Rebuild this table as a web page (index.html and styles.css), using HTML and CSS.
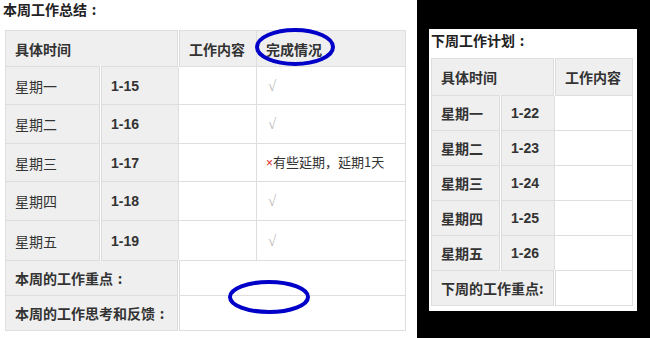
FILE: index.html
```html
<!DOCTYPE html>
<html lang="zh">
<head>
<meta charset="utf-8">
<link rel="stylesheet" href="styles.css">
</head>
<body>
<div class="page">
  <section class="left">
    <h2 class="title">本周工作总结<span class="colon">:</span></h2>
    <table class="sum">
      <colgroup><col class="c1"><col class="c2"><col class="c3"><col class="c4"></colgroup>
      <tr class="hd"><th colspan="2">具体时间</th><th>工作内容</th><th>完成情况</th></tr>
      <tr class="r38"><td class="lab">星期一</td><td class="lab date">1-15</td><td></td><td class="ok">√</td></tr>
      <tr class="r39"><td class="lab">星期二</td><td class="lab date">1-16</td><td></td><td class="ok">√</td></tr>
      <tr class="r38"><td class="lab">星期三</td><td class="lab date">1-17</td><td></td><td class="note"><span class="x">×</span>有些延期，延期1天</td></tr>
      <tr class="r39"><td class="lab">星期四</td><td class="lab date">1-18</td><td></td><td class="ok">√</td></tr>
      <tr class="r40"><td class="lab">星期五</td><td class="lab date">1-19</td><td></td><td class="ok">√</td></tr>
      <tr class="r35"><td class="lab bold" colspan="2">本周的工作重点<span class="colon">:</span></td><td colspan="2"></td></tr>
      <tr class="r35"><td class="lab bold" colspan="2">本周的工作思考和反馈<span class="colon">:</span></td><td colspan="2"></td></tr>
    </table>
    <svg class="mark mark1" width="86" height="42" viewBox="0 0 86 42"><ellipse cx="43" cy="21" rx="38" ry="17" fill="none" stroke="#0000c8" stroke-width="4"/></svg>
    <svg class="mark mark2" width="86" height="38" viewBox="0 0 86 38"><ellipse cx="43" cy="19" rx="39" ry="15" fill="none" stroke="#0000c8" stroke-width="4"/></svg>
  </section>
  <section class="right">
    <div class="panel">
      <h2 class="title2">下周工作计划<span class="colon">:</span></h2>
      <table class="plan">
        <colgroup><col class="p1"><col class="p2"><col class="p3"></colgroup>
        <tr class="phd"><th colspan="2">具体时间</th><th>工作内容</th></tr>
        <tr><td class="lab">星期一</td><td class="lab date">1-22</td><td></td></tr>
        <tr><td class="lab">星期二</td><td class="lab date">1-23</td><td></td></tr>
        <tr><td class="lab">星期三</td><td class="lab date">1-24</td><td></td></tr>
        <tr><td class="lab">星期四</td><td class="lab date">1-25</td><td></td></tr>
        <tr><td class="lab">星期五</td><td class="lab date">1-26</td><td></td></tr>
        <tr><td class="lab" colspan="2">下周的工作重点:</td><td></td></tr>
      </table>
    </div>
  </section>
</div>
</body>
</html>
```
FILE: styles.css
```css
* { box-sizing: border-box; }
html, body { margin: 0; padding: 0; }
body {
  background: #000;
  font-family: "Noto Sans CJK SC", "Liberation Sans", sans-serif;
  color: #333;
  font-size: 14px;
}
.page {
  display: flex;
  width: 650px;
  height: 338px;
  overflow: hidden;
}
.left {
  position: relative;
  width: 417px;
  height: 338px;
  background: #fff;
  padding: 0 0 0 5px;
}
.title {
  margin: 0 0 0 -2px;
  height: 30px;
  padding-top: 0;
  font-size: 14px;
  line-height: 18px;
  font-weight: bold;
  color: #222;
}
.colon {
  display: inline-block;
  width: 14px;
  text-align: center;
  font-weight: bold;
}
table {
  border-collapse: collapse;
  table-layout: fixed;
}
.sum { width: 400px; }
.c1 { width: 95px; }
.c2 { width: 78px; }
.c3 { width: 78px; }
.c4 { width: 149px; }
th, td {
  border: 1px solid #dedede;
  padding: 0 0 0 9px;
  text-align: left;
  vertical-align: middle;
  font-size: 14px;
  line-height: 18px;
  white-space: nowrap;
  overflow: hidden;
}
th {
  background: #efefef;
  font-weight: bold;
  color: #333;
}
.sum td.lab:first-child, .plan td.lab:first-child { border-right: 3px double #dcdcdc; }
.sum .hd th:first-child { border-right: 3px double #dcdcdc; }
.hd { height: 36px; }
.r38 { height: 38px; }
.r39 { height: 39px; }
.r40 { height: 40px; }
.r35 { height: 35px; }
.lab { background: #efefef; color: #333; }
.date { font-weight: bold; font-family: "Liberation Sans", Arial, sans-serif; }
.bold { font-weight: bold; }
.ok {
  color: #b8b8b8;
  font-family: "Liberation Serif", serif;
  font-size: 15px;
  padding-left: 11px;
}
.note { padding-left: 9px; font-size: 13px; color: #333; }
.x { color: #d22; font-size: 12px; font-family: "Liberation Sans", sans-serif; }
.mark { position: absolute; }
.mark1 { left: 252px; top: 26px; }
.mark2 { left: 226px; top: 278px; }

.right {
  padding: 29px 0 0 12px;
}
.panel {
  width: 208px;
  height: 282px;
  background: #fff;
  padding: 0 5px 0 2px;
}
.title2 {
  margin: 0;
  height: 29px;
  padding-top: 2px;
  font-size: 14px;
  line-height: 18px;
  font-weight: bold;
  color: #222;
}
.plan { width: 201px; }
.p1 { width: 69px; }
.p2 { width: 54px; }
.p3 { width: 78px; }
.plan tr { height: 35px; }
.plan .phd { height: 37px; }
.plan td, .plan th { padding-left: 9px; }
.plan td.lab { font-weight: bold; }
.plan .phd th:first-child { border-right: 3px double #dcdcdc; }
```
